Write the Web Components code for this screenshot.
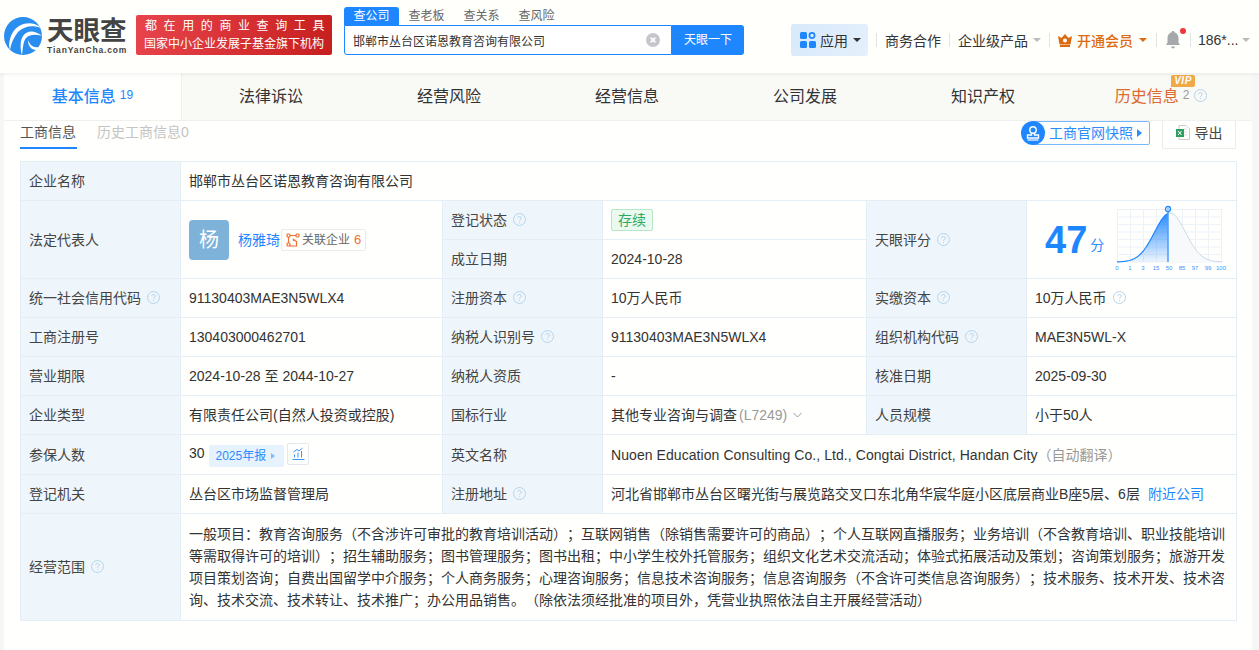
<!DOCTYPE html>
<html lang="zh">
<head>
<meta charset="utf-8">
<title>天眼查</title>
<style>
  html, body { margin: 0; padding: 0; height: 100%; overflow: hidden; }
  body {
    background: #f6f6f5;
    color: #333;
    font-family: "Liberation Sans", "Noto Sans CJK SC", sans-serif;
    font-size: 14px;
    text-spacing-trim: space-all;
  }
</style>
</head>
<body>
<tyc-header></tyc-header>
<tyc-tabs></tyc-tabs>
<tyc-panel>
  <tyc-subbar></tyc-subbar>
  <tyc-info></tyc-info>
</tyc-panel>

<script>
class HelpIcon extends HTMLElement {
  constructor() {
    super();
    this.attachShadow({ mode: "open" });
    this.shadowRoot.innerHTML = /* html */`
    <style>
      :host { display: inline-block; width: 13px; height: 13px; margin-left: 6px; vertical-align: -1px; }
      svg { display: block; }
    </style>
    <svg width="13" height="13" viewBox="0 0 13 13" fill="none" stroke="#b5d3ea">
      <circle cx="6.5" cy="6.5" r="6"/>
      <path d="M4.7 5.1c0-1 .8-1.7 1.8-1.7s1.8.7 1.8 1.6c0 1.4-1.8 1.4-1.8 2.8"/>
      <path d="M6.5 9.2v1"/>
    </svg>`;
  }
}
customElements.define("help-icon", HelpIcon);

class TycHeader extends HTMLElement {
  constructor() {
    super();
    this.attachShadow({ mode: "open" });
  }

  static get styles() {
    return /* css */`
      :host {
        display: flex;
        align-items: flex-start;
        height: 73px;
        background: #fffffc;
        box-shadow: 0 1px 4px rgba(0,0,0,.07);
        position: relative;
        z-index: 2;
      }
      .logo { display: flex; margin: 17px 0 0 4px; width: 132px; }
      .logo-words { margin-left: 5px; color: #444; }
      .logo-cn { font-size: 26.5px; line-height: 27px; font-weight: 700; height: 26px; margin-top: 1px; white-space: nowrap; }
      .logo-en { font-size: 8.5px; line-height: 10px; font-weight: 700; letter-spacing: .85px; white-space: nowrap; margin-top: 1px; }
      .banner {
        width: 196px; height: 40px; margin-top: 15px; border-radius: 2px;
        background: linear-gradient(100deg, #e8444c, #c61f1e);
        color: #fff; font-size: 12px; line-height: 18px; text-align: center;
        box-sizing: border-box; padding: 2px 0;
      }
      .banner div:first-child { letter-spacing: 6.6px; margin-right: -8px; }
      .search { margin: 7px 0 0 12px; width: 400px; }
      .kinds { display: flex; font-size: 12px; line-height: 18px; height: 18px; color: #666; }
      .kinds span { width: 55px; text-align: center; }
      .kinds .on { background: #1e87ff; color: #fff; border-radius: 3px 3px 0 0; }
      .box { display: flex; height: 30px; }
      .input {
        width: 328px; box-sizing: border-box; display: flex; align-items: center;
        border: 1px solid #1e87ff; border-radius: 0 0 0 3px; background: #fff;
        padding: 0 11px 0 8px; font-size: 12px; justify-content: space-between;
      }
      .go { width: 72px; background: #1e87ff; color: #fff; font-size: 12px; line-height: 30px; text-align: center; border-radius: 0 3px 3px 0; }
      .nav { display: flex; align-items: center; margin: 24px 0 0 47px; height: 32px; white-space: nowrap; }
      .apps {
        display: flex; align-items: center; gap: 4px; width: 77px; height: 32px; border-radius: 3px;
        box-sizing: border-box; padding-left: 9px;
        background: linear-gradient(120deg, #d8e9fb, #e4f0fb);
      }
      .sep { width: 1px; height: 14px; background: #e2e2e2; }
      .caret { width: 0; height: 0; border: 4px solid transparent; border-top: 4px solid #bbb; border-bottom: 0; margin-left: 5px; }
      .apps .caret { border-top-color: #333; margin-left: 1px; }
      .vip { color: #dd6a0e; display: flex; align-items: center; font-weight: 500; }
      .vip .caret { border-top-color: #dd6a0e; margin-left: 6px; }
      .bell { position: relative; display: block; width: 16px; height: 20px; }
      .bell i { position: absolute; right: -5px; top: -2px; width: 6px; height: 6px; border-radius: 50%; background: #f0353d; }
    `;
  }

  connectedCallback() {
    this.shadowRoot.innerHTML = /* html */`
    <style>${TycHeader.styles}</style>
    <div class="logo">
      <svg width="38" height="38" viewBox="0 0 38 38">
        <circle cx="19" cy="19" r="19" fill="#2a8df0"/>
        <path d="M37 11C28 3 15 6 9 15 6 20 4 27 6 33 7 26 10 20 14 15 20 9 29 8 37 11Z" fill="#fff"/>
        <path d="M38 19C31 13 23 13 19 19 16 24 16 31 18 38 19 31 19 25 22 21 26 17 32 17 38 19Z" fill="#fff"/>
        <path d="M24 23C26 29 32 33 38 28L36 32C30 35 24 31 24 23Z" fill="#fff"/>
      </svg>
      <div class="logo-words">
        <div class="logo-cn">天眼查</div>
        <div class="logo-en">TianYanCha.com</div>
      </div>
    </div>
    <div class="banner">
      <div>都在用的商业查询工具</div>
      <div>国家中小企业发展子基金旗下机构</div>
    </div>
    <div class="search">
      <div class="kinds"><span class="on">查公司</span><span>查老板</span><span>查关系</span><span>查风险</span></div>
      <div class="box">
        <div class="input">
          <span>邯郸市丛台区诺恩教育咨询有限公司</span>
          <svg width="14" height="14" viewBox="0 0 14 14"><circle cx="7" cy="7" r="7" fill="#c4c6cb"/><path d="M4.6 4.6l4.8 4.8M9.4 4.6l-4.8 4.8" stroke="#fff" stroke-width="1.5"/></svg>
        </div>
        <div class="go">天眼一下</div>
      </div>
    </div>
    <div class="nav">
      <div class="apps">
        <svg width="16" height="16" viewBox="0 0 16 16" fill="#1e87ff">
          <rect x="0" y="0" width="7" height="7" rx="1.5"/>
          <circle cx="12" cy="3.5" r="2.6" fill="none" stroke="#1e87ff" stroke-width="1.7"/>
          <rect x="0" y="9" width="7" height="7" rx="1.5"/>
          <rect x="9" y="9" width="7" height="7" rx="1.5"/>
        </svg>
        <span>应用</span><span class="caret"></span>
      </div>
      <span class="sep" style="margin:0 8px"></span>
      <span>商务合作</span>
      <span class="sep" style="margin:0 8px"></span>
      <span>企业级产品</span><span class="caret"></span>
      <span class="sep" style="margin:0 8px"></span>
      <span class="vip">
        <svg width="14" height="13" viewBox="0 0 14 13" style="margin-right:5px" fill="#dd6a0e">
          <path d="M0 2l3.5 2L7 0l3.500 4L14 2l-1.500 8.500h-11z"/>
          <circle cx="7" cy="6.500" r="2" fill="#fff"/>
          <rect x="2" y="11" width="10" height="2"/>
        </svg>
        <span>开通会员</span><span class="caret"></span>
      </span>
      <span class="sep" style="margin:0 8px 0 9px"></span>
      <span class="bell">
        <svg width="16" height="20" viewBox="0 0 16 20" fill="#a6a8ac">
          <path d="M8 1c.8 0 1.300.5 1.400 1.200C12 3 13.500 5.300 13.500 8v4.500L15 15H1l1.500-2.500V8C2.500 5.300 4 3 6.600 2.200 6.700 1.500 7.200 1 8 1z"/>
          <path d="M6 16.500h4c0 1-1 2-2 2s-2-1-2-2z"/>
        </svg>
        <i></i>
      </span>
      <span class="sep" style="margin:0 7px 0 9px"></span>
      <span>186*...</span><span class="caret" style="margin-left:4px"></span>
    </div>`;
  }
}
customElements.define("tyc-header", TycHeader);

class TycTabs extends HTMLElement {
  constructor() {
    super();
    this.attachShadow({ mode: "open" });
  }

  static get styles() {
    return /* css */`
      :host {
        display: grid;
        grid-template-columns: repeat(7, 178px);
        margin-left: 4px;
        width: 1248px;
        height: 47px;
        background: #f9f9f6;
        border-bottom: 1px solid #f0f0ee;
        font-size: 16px;
        color: #333;
      }
      .tab { display: flex; align-items: center; justify-content: center; position: relative; padding-bottom: 3px; box-sizing: border-box; }
      .on { background: #fffffd; color: #1e87ff; font-weight: 500; border-right: 1px solid #f0f0ee; }
      .n { font-size: 12px; font-weight: 400; margin-left: 4px; }
      .hist { color: #dd6a2e; }
      .hist .n { color: #999; }
      .hist help-icon { margin-left: 5px; }
      .vip {
        position: absolute; left: 99px; top: 2px; width: 24px; height: 12px; text-align: center;
        background: #f0a848; color: #fff; font: italic 700 10px/12px "Liberation Sans", sans-serif;
        border-radius: 2px 2px 2px 0; letter-spacing: .5px;
      }
    `;
  }

  connectedCallback() {
    const names = ["法律诉讼", "经营风险", "经营信息", "公司发展", "知识产权"];
    this.shadowRoot.innerHTML = /* html */`
    <style>${TycTabs.styles}</style>
    <div class="tab on">基本信息<span class="n">19</span></div>
    ${names.map((n) => `<div class="tab">${n}</div>`).join("")}
    <div class="tab hist"><span class="vip">VIP</span>历史信息<span class="n">2</span><help-icon></help-icon></div>`;
  }
}
customElements.define("tyc-tabs", TycTabs);

class TycPanel extends HTMLElement {
  constructor() {
    super();
    this.attachShadow({ mode: "open" });
    this.shadowRoot.innerHTML = /* html */`
    <style>
      :host { display: block; margin-left: 4px; width: 1248px; height: 560px; background: #fffffd; box-sizing: border-box; padding: 0 16px; }
    </style>
    <slot></slot>`;
  }
}
customElements.define("tyc-panel", TycPanel);

class TycSubbar extends HTMLElement {
  constructor() {
    super();
    this.attachShadow({ mode: "open" });
  }

  static get styles() {
    return /* css */`
      :host { display: flex; align-items: flex-start; height: 40px; font-size: 14px; }
      .t { line-height: 22px; height: 28px; box-sizing: border-box; }
      .on { color: #555; border-bottom: 2px solid #1e87ff; width: 57px; white-space: nowrap; }
      .off { color: #c4c4c4; margin-left: 20px; }
      .snap { margin-left: auto; display: flex; align-items: center; height: 24px; }
      .snap svg { position: relative; z-index: 1; }
      .snap-box {
        height: 24px; box-sizing: border-box; margin-left: -12px; padding: 0 7px 0 15px;
        border: 1px solid #77b7ff; border-radius: 2px; color: #2a8cff;
        display: flex; align-items: center; gap: 4px; line-height: 22px;
      }
      .tri { width: 0; height: 0; border: 4px solid transparent; border-left: 5px solid #2a8cff; border-right: 0; }
      .exp {
        margin-left: 12px; width: 74px; height: 28px; box-sizing: border-box; padding-bottom: 5px;
        border: 1px solid #e8ebf0; border-top: 0; border-radius: 0 0 2px 2px;
        display: flex; align-items: center; justify-content: center; gap: 5px; color: #444;
      }
    `;
  }

  connectedCallback() {
    this.shadowRoot.innerHTML = /* html */`
    <style>${TycSubbar.styles}</style>
    <div class="t on">工商信息</div>
    <div class="t off">历史工商信息0</div>
    <div class="snap">
      <svg width="24" height="24" viewBox="0 0 24 24">
        <circle cx="12" cy="12" r="12" fill="#1e87ff"/>
        <circle cx="12" cy="9" r="3.200" fill="none" stroke="#fff" stroke-width="1.400"/>
        <path d="M10.500 12v2H6.500v3h11v-3h-4v-2" fill="none" stroke="#fff" stroke-width="1.400"/>
        <path d="M6.500 19h11" stroke="#fff" stroke-width="1.200"/>
      </svg>
      <div class="snap-box">工商官网快照<span class="tri"></span></div>
    </div>
    <div class="exp">
      <svg width="14" height="15" viewBox="0 0 14 15">
        <path d="M3 .5h7l3.500 3.500v10.500H3z" fill="#fff" stroke="#ccc"/>
        <path d="M8 4h3M8 7h3M8 10h3" stroke="#ddd"/>
        <rect x="0" y="4" width="8" height="8" fill="#2e9e5e"/>
        <path d="M2 6l3.500 4M5.500 6L2 10" stroke="#fff"/>
      </svg>
      <span>导出</span>
    </div>`;
  }
}
customElements.define("tyc-subbar", TycSubbar);

class ScoreChart extends HTMLElement {
  constructor() {
    super();
    this.attachShadow({ mode: "open" });
  }

  curve(from, to) {
    // bell curve across the grid, peak just right of the marker
    const pts = [];
    for (let x = from; x <= to; x += 1) {
      const d = (x - 53) / 15.5;
      pts.push(`${x} ${(57 - 49 * Math.exp(-d * d / 2)).toFixed(2)}`);
    }
    return pts;
  }

  connectedCallback() {
    const lines = [];
    for (let i = 0; i <= 8; i++) lines.push(`<path d="M${i * 13 + .5} 4V57"/>`);
    for (let i = 0; i <= 7; i++) lines.push(`<path d="M0 ${i * 7.5 + 4.5}H105"/>`);
    const labels = [0, 1, 3, 15, 50, 85, 97, 99, 100];
    const left = this.curve(0, 51);
    const right = this.curve(51, 105);
    this.shadowRoot.innerHTML = /* html */`
    <style>
      :host { display: block; width: 110px; height: 70px; }
      svg { display: block; overflow: visible; }
      text { font: 6px "Liberation Sans", sans-serif; fill: #3b95ff; text-anchor: middle; }
    </style>
    <svg width="110" height="70" viewBox="0 0 110 70">
      <defs>
        <linearGradient id="fillB" x1="0" y1="0" x2="0" y2="1">
          <stop offset="0" stop-color="#2a8cff"/>
          <stop offset="1" stop-color="#2a8cff" stop-opacity=".08"/>
        </linearGradient>
      </defs>
      <g stroke="#edf2f8" fill="none">${lines.join("")}</g>
      <path d="M${right.join("L")}L105 57L51 57Z" fill="#f7f9fb"/>
      <path d="M${left.join("L")}L51 57Z" fill="url(#fillB)"/>
      <path d="M${right.join("L")}" fill="none" stroke="#c9d9ea"/>
      <path d="M${left.join("L")}" fill="none" stroke="#1e87ff" stroke-width="1.200"/>
      <path d="M51 6V57" stroke="#4a9dff" stroke-width="1.500"/>
      <circle cx="51" cy="4" r="2.500" fill="#fff" stroke="#1e87ff" stroke-width="1.300"/>
      <circle cx="51" cy="4" r=".8" fill="#1e87ff"/>
      ${labels.map((l, i) => `<text x="${i * 13}" y="65">${l}</text>`).join("")}
    </svg>`;
  }
}
customElements.define("score-chart", ScoreChart);

class TycInfo extends HTMLElement {
  constructor() {
    super();
    this.attachShadow({ mode: "open" });
  }

  static get styles() {
    return /* css */`
      :host { display: block; }
      table { border-collapse: collapse; table-layout: fixed; width: 1216px; font-size: 14px; color: #333; }
      td { border: 1px solid #e6eef5; padding: 0 8px; height: 39px; box-sizing: border-box; line-height: 20px; white-space: nowrap; background: #fffffd; }
      td.l { background: #eff6fb; color: #444; }
      tr.tall td { height: 40px; }
      .scope { white-space: normal; padding: 9px 8px; line-height: 22px; }
      .person { display: flex; align-items: center; }
      .avatar { width: 40px; height: 40px; border-radius: 4px; background: #7fb2d9; color: #fff; font-size: 20px; line-height: 40px; text-align: center; margin-right: 9px; }
      .link { color: #1e87ff; }
      .rel {
        display: inline-flex; align-items: center; height: 22px; box-sizing: border-box; margin-left: 1px;
        padding: 0 4px; border: 1px solid #e8ebf0; border-radius: 2px; font-size: 12px; color: #666; gap: 2px;
      }
      .rel b { font-weight: 400; font-size: 13px; color: #f0702e; margin-left: 2px; }
      .status { display: inline-block; height: 22px; line-height: 20px; box-sizing: border-box; padding: 0 6px; border: 1px solid #b7e6c9; background: #eafaf0; color: #2bab62; border-radius: 2px; }
      .score { display: flex; align-items: center; padding-left: 10px; }
      .num { font: 700 38px/40px "Liberation Sans", sans-serif; color: #1e87ff; }
      .fen { color: #2a8cff; font-size: 14px; margin: 10px 0 0 3px; width: 27px; }
      .report {
        display: inline-flex; align-items: center; gap: 5px; height: 22px; padding: 0 9px 0 6px; margin-left: 1px;
        background: #e6f2fd; color: #2a8cff; border-radius: 2px; font-size: 12px; vertical-align: middle; position: relative; top: 1px;
      }
      .tri { width: 0; height: 0; border: 3.500px solid transparent; border-left: 4px solid #7dbcff; border-right: 0; }
      .graph { display: inline-flex; align-items: center; justify-content: center; width: 22px; height: 22px; box-sizing: border-box; border: 1px solid #e3e8ef; border-radius: 2px; margin-left: 3px; vertical-align: middle; position: relative; top: -1px; }
      .gray { color: #999; }
      .code { color: #999; margin-left: 2px; }
      .en { letter-spacing: .07px; }
      .near { margin-left: 8px; }
    `;
  }

  connectedCallback() {
    this.shadowRoot.innerHTML = /* html */`
    <style>${TycInfo.styles}</style>
    <table>
      <colgroup><col style="width:160px"><col style="width:262px"><col style="width:160px"><col style="width:264px"><col style="width:160px"><col style="width:210px"></colgroup>
      <tr><td class="l">企业名称</td><td colspan="5">邯郸市丛台区诺恩教育咨询有限公司</td></tr>
      <tr>
        <td class="l" rowspan="2">法定代表人</td>
        <td rowspan="2">
          <div class="person">
            <div class="avatar">杨</div>
            <span class="link">杨雅琦</span>
            <span class="rel">
              <svg width="14" height="14" viewBox="0 0 14 14" fill="none" stroke="#f0702e" stroke-width="1.200">
                <rect x="1" y="1" width="3" height="3" rx="1"/><rect x="10" y="1" width="3" height="3" rx="1"/><rect x="1" y="10" width="3" height="3" rx="1"/>
                <path d="M4 2.500h6M2.500 4v6M7 6l3.500 2.500V13h-7M7 6L8 8"/>
              </svg>
              关联企业<b>6</b>
            </span>
          </div>
        </td>
        <td class="l">登记状态<help-icon></help-icon></td>
        <td><span class="status">存续</span></td>
        <td class="l" rowspan="2">天眼评分<help-icon></help-icon></td>
        <td rowspan="2"><div class="score"><span class="num">47</span><span class="fen">分</span><score-chart></score-chart></div></td>
      </tr>
      <tr><td class="l">成立日期</td><td>2024-10-28</td></tr>
      <tr>
        <td class="l">统一社会信用代码<help-icon></help-icon></td><td>91130403MAE3N5WLX4</td>
        <td class="l">注册资本<help-icon></help-icon></td><td>10万人民币</td>
        <td class="l">实缴资本<help-icon></help-icon></td><td>10万人民币<help-icon></help-icon></td>
      </tr>
      <tr>
        <td class="l">工商注册号</td><td>130403000462701</td>
        <td class="l">纳税人识别号<help-icon></help-icon></td><td>91130403MAE3N5WLX4</td>
        <td class="l">组织机构代码<help-icon></help-icon></td><td>MAE3N5WL-X</td>
      </tr>
      <tr>
        <td class="l">营业期限</td><td>2024-10-28 至 2044-10-27</td>
        <td class="l">纳税人资质</td><td>-</td>
        <td class="l">核准日期</td><td>2025-09-30</td>
      </tr>
      <tr>
        <td class="l">企业类型</td><td>有限责任公司(自然人投资或控股)</td>
        <td class="l">国标行业</td>
        <td>其他专业咨询与调查<span class="code">(L7249)</span>
          <svg width="9" height="6" viewBox="0 0 9 6" fill="none" stroke="#999" style="margin-left:2px;vertical-align:2px"><path d="M.5 1l4 4 4-4"/></svg>
        </td>
        <td class="l">人员规模</td><td>小于50人</td>
      </tr>
      <tr class="tall">
        <td class="l">参保人数</td>
        <td>30 <span class="report">2025年报<span class="tri"></span></span><span class="graph">
          <svg width="13" height="13" viewBox="0 0 13 13" fill="none" stroke="#3b95ff"><path d="M.5 12.500h12M2.500 10.500V7.500M6 10.500V5.500M9.500 10.500V4M1.500 5L5 2.500 7 4l3.500-3"/></svg>
        </span></td>
        <td class="l">英文名称</td>
        <td colspan="3"><span class="en">Nuoen Education Consulting Co., Ltd., Congtai District, Handan City</span><span class="gray">（自动翻译）</span></td>
      </tr>
      <tr>
        <td class="l">登记机关</td><td>丛台区市场监督管理局</td>
        <td class="l">注册地址<help-icon></help-icon></td>
        <td colspan="3">河北省邯郸市丛台区曙光街与展览路交叉口东北角华宸华庭小区底层商业B座5层、6层<span class="link near">附近公司</span></td>
      </tr>
      <tr>
        <td class="l">经营范围<help-icon></help-icon></td>
        <td colspan="5" class="scope">一般项目：教育咨询服务（不含涉许可审批的教育培训活动）；互联网销售（除销售需要许可的商品）；个人互联网直播服务；业务培训（不含教育培训、职业技能培训等需取得许可的培训）；招生辅助服务；图书管理服务；图书出租；中小学生校外托管服务；组织文化艺术交流活动；体验式拓展活动及策划；咨询策划服务；旅游开发项目策划咨询；自费出国留学中介服务；个人商务服务；心理咨询服务；信息技术咨询服务；信息咨询服务（不含许可类信息咨询服务）；技术服务、技术开发、技术咨询、技术交流、技术转让、技术推广；办公用品销售。（除依法须经批准的项目外，凭营业执照依法自主开展经营活动）</td>
      </tr>
    </table>`;
  }
}
customElements.define("tyc-info", TycInfo);
</script>
</body>
</html>
